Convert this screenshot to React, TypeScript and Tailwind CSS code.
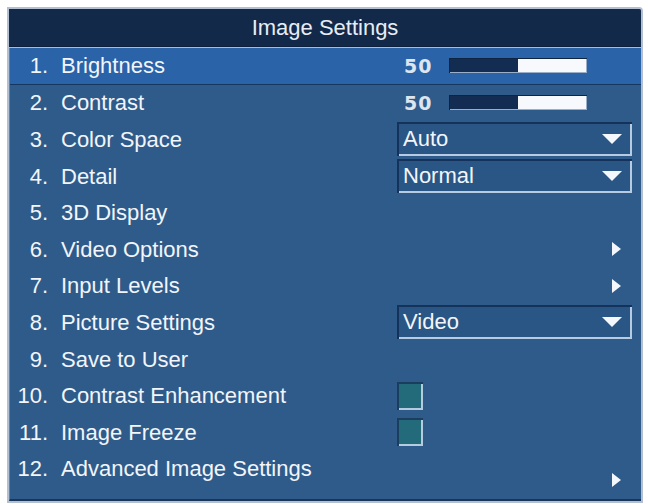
import React from 'react';

type Row = {
  n: string;
  label: string;
  kind?: 'slider' | 'select' | 'arrow' | 'check';
  value?: string;
};

const rows: Row[] = [
  { n: '1.', label: 'Brightness', kind: 'slider', value: '50' },
  { n: '2.', label: 'Contrast', kind: 'slider', value: '50' },
  { n: '3.', label: 'Color Space', kind: 'select', value: 'Auto' },
  { n: '4.', label: 'Detail', kind: 'select', value: 'Normal' },
  { n: '5.', label: '3D Display' },
  { n: '6.', label: 'Video Options', kind: 'arrow' },
  { n: '7.', label: 'Input Levels', kind: 'arrow' },
  { n: '8.', label: 'Picture Settings', kind: 'select', value: 'Video' },
  { n: '9.', label: 'Save to User' },
  { n: '10.', label: 'Contrast Enhancement', kind: 'check' },
  { n: '11.', label: 'Image Freeze', kind: 'check' },
  { n: '12.', label: 'Advanced Image Settings', kind: 'arrow' },
];

const Arrow = () => (
  <svg width="9" height="14" viewBox="0 0 9 14">
    <path d="M0 0 L9 7 L0 14 Z" fill="#f4f7fb" />
  </svg>
);

const Control = ({ row, last }: { row: Row; last: boolean }) => {
  if (row.kind === 'slider') {
    return (
      <div className="flex items-center h-full pl-[7px]">
        <span className="w-[45px] text-[19px] font-bold tracking-[1px] text-[#dde5ee] font-['DejaVu_Sans',sans-serif]">{row.value}</span>
        <div className="flex w-[138px] h-[15px] p-px bg-[#9ab0c9] shadow-[inset_1px_1px_0_#0f2440]">
          <div className="w-1/2 bg-[#132d52]" />
          <div className="w-1/2 bg-[#f7f9fc]" />
        </div>
      </div>
    );
  }
  if (row.kind === 'select') {
    return (
      <div className="flex items-center h-full">
        <div className="flex items-center justify-between w-[235px] h-[34px] pl-[6px] pr-[10px] bg-[#2a5686] shadow-[inset_2px_2px_0_#15325a,inset_-2px_-2px_0_#b7cbe2]">
          <span className="text-[22px] text-[#f2f5f9] leading-none">{row.value}</span>
          <svg width="20" height="10" viewBox="0 0 20 10">
            <path d="M0 0 L20 0 L10 10 Z" fill="#f4f7fb" />
          </svg>
        </div>
      </div>
    );
  }
  if (row.kind === 'arrow') {
    return (
      <div className={`flex justify-end h-full pr-[11px] ${last ? 'items-end' : 'items-center'}`}>
        <Arrow />
      </div>
    );
  }
  if (row.kind === 'check') {
    return (
      <div className="flex items-center h-full">
        <div className="w-[26px] h-[28px] bg-[#236a7b] shadow-[inset_2px_2px_0_#1b3e5e,inset_-2px_-2px_0_#b5cbe0]" />
      </div>
    );
  }
  return null;
};

export default function App() {
  return (
    <div className="w-[648px] h-[504px] bg-white pt-[7px] pl-[7px] font-['Liberation_Sans',Arial,sans-serif]">
      <div className="w-[636px] h-[496px] border-2 border-[#b3c0d1] rounded-tr-[4px] bg-[#2f5b8b] flex flex-col overflow-hidden">
        <div className="h-[38px] bg-[#13294a] flex items-center justify-center text-[22px] text-[#e8edf4] border-b border-[#0d1f3a]">
          Image Settings
        </div>
        <div className="h-px bg-[#a9bdd4]" />
        <div className="flex-1 flex flex-col border-l border-[#5f82ab] border-b-2 border-b-[#1a3558]">
          {rows.map((r, i) => (
            <div
              key={r.n}
              className={`flex items-stretch h-[36.6px] ${i === 0 ? 'bg-[#2a63a8] border-b border-[#173760]' : ''}`}
            >
              <div className="w-[387px] flex items-center text-[22px] text-[#f2f5f9]">
                <span className="w-[38px] text-right">{r.n}</span>
                <span className="ml-[13px]">{r.label}</span>
              </div>
              <div className="w-[235px]">
                <Control row={r} last={i === rows.length - 1} />
              </div>
            </div>
          ))}
        </div>
      </div>
    </div>
  );
}
